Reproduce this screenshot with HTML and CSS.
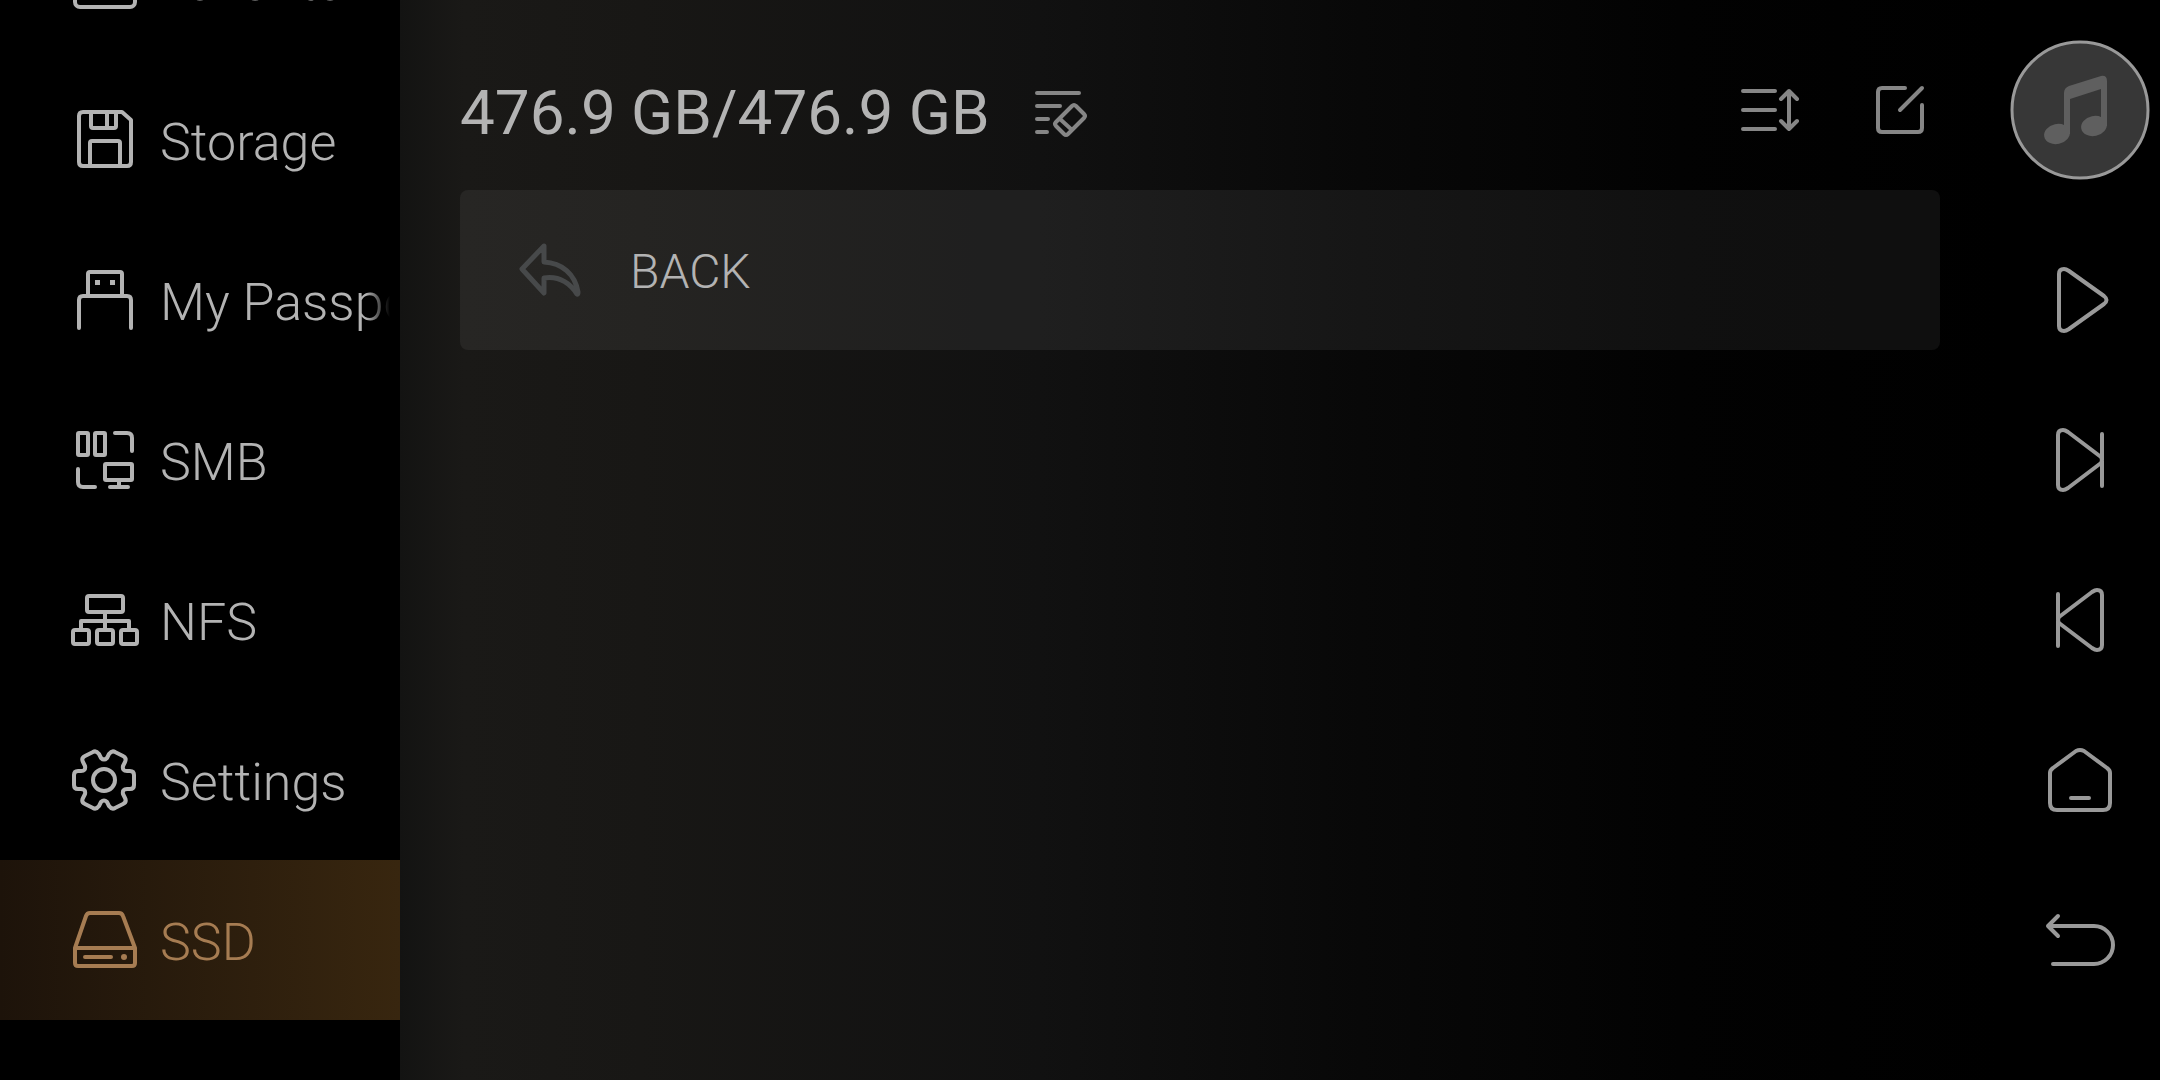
FILE: index.html
```html
<!DOCTYPE html>
<html lang="en">
<head>
<meta charset="utf-8">
<title>Storage browser</title>
<link rel="stylesheet" href="styles.css">
</head>
<body>
<div class="app">
  <nav class="sidebar" aria-label="Sources">
    <a class="source" href="#favorite">
      <svg class="icon" viewBox="0 0 80 80"><rect x="10" y="7" width="60" height="60" rx="5"/></svg>
      <span class="source-name">Favorite</span>
    </a>
    <a class="source" href="#storage">
      <svg class="icon" viewBox="0 0 80 80"><path d="M18 12H57L66 20V62Q66 66 62 66H18Q14 66 14 62V16Q14 12 18 12ZM26 12V26Q26 28 28 28H49Q51 28 51 26V12M42 12V27M25 66V43Q25 41 27 41H53Q55 41 55 43V66"/></svg>
      <span class="source-name">Storage</span>
    </a>
    <a class="source" href="#passport">
      <svg class="icon" viewBox="0 0 80 80"><path d="M14 68V40Q14 36 18 36H62Q66 36 66 40V68M23 36V14Q23 12 25 12H55Q57 12 57 14V36"/><path class="solid" d="M30 20h5v5h-5zM45 20h5v5h-5z"/></svg>
      <span class="source-name">My Passport</span>
    </a>
    <a class="source" href="#smb">
      <svg class="icon" viewBox="0 0 80 80"><rect x="13" y="13" width="10" height="22" rx="1"/><rect x="30" y="13" width="10" height="22" rx="1"/><path d="M50 13H62Q67 13 67 18V31M13 49V62Q13 67 18 67H30M45 67H63M54 60V67"/><rect x="40" y="44" width="27" height="16" rx="1"/></svg>
      <span class="source-name">SMB</span>
    </a>
    <a class="source" href="#nfs">
      <svg class="icon" viewBox="0 0 80 80"><rect x="22" y="16" width="36" height="16" rx="2"/><rect x="8" y="50" width="16" height="14" rx="2"/><rect x="32" y="50" width="16" height="14" rx="2"/><rect x="56" y="50" width="16" height="14" rx="2"/><path d="M40 32V50M16 50V41H64V50"/></svg>
      <span class="source-name">NFS</span>
    </a>
    <a class="source" href="#settings">
      <svg class="icon" viewBox="0 0 80 80"><circle cx="39" cy="40" r="11"/><path d="M28 12Q31 10 34 14L36 18Q39 21 42 18L44 14Q47 10 50 12L58 16Q62 18 60 22L58 26Q57 31 62 31H65Q69 31 69 35V45Q69 49 65 49H62Q57 49 58 54L60 58Q62 62 58 64L50 68Q47 70 44 66L42 62Q39 59 36 62L34 66Q31 70 28 68L20 64Q16 62 18 58L20 54Q21 49 16 49H13Q9 49 9 45V35Q9 31 13 31H16Q21 31 20 26L18 22Q16 18 20 16Z"/></svg>
      <span class="source-name">Settings</span>
    </a>
    <a class="source source-active" href="#ssd" aria-current="page">
      <svg class="icon" viewBox="0 0 80 80"><path d="M25 13H54Q57 13 58 16L70 48V63Q70 66 67 66H13Q10 66 10 63V48L21 16Q22 13 25 13ZM10 48H70M20 57H46"/><circle class="solid" cx="59" cy="57" r="3"/></svg>
      <span class="source-name">SSD</span>
    </a>
  </nav>

  <main class="browser">
    <header class="toolbar">
      <h1 class="capacity">476.9 GB/476.9 GB</h1>
      <button class="tool" type="button" aria-label="Clear list">
        <svg class="icon" viewBox="0 0 80 80"><path d="M17 23H59M17 36H40M17 49H28M17 62H27M36 52L52 36Q54 34 56 36L64 44Q66 46 64 48L48 64Q46 66 44 64L36 56Q34 54 36 52M40 49L52 60"/></svg>
      </button>
      <button class="tool tool-sort" type="button" aria-label="Sort">
        <svg class="icon" viewBox="0 0 80 80"><path d="M13 21H45M13 40H45M13 59H45M59 21V59M51 29L59 21L67 29M51 51L59 59L67 51"/></svg>
      </button>
      <button class="tool" type="button" aria-label="Edit">
        <svg class="icon" viewBox="0 0 80 80"><path d="M45 18H22Q18 18 18 22V58Q18 62 22 62H58Q62 62 62 58V35M62 18L40 40"/></svg>
      </button>
    </header>
    <button class="back" type="button">
      <svg class="icon" viewBox="0 0 80 80"><path d="M34 16L12 39L34 63V48C48 46 59 52 67 64Q68 65 68 62C65 44 52 33 34 32Z"/></svg>
      <span class="back-name">BACK</span>
    </button>
  </main>

  <aside class="controls" aria-label="Player controls">
    <button class="control playing" type="button" aria-label="Now playing">
      <svg class="cover" viewBox="0 0 140 140"><circle class="disc" cx="70" cy="70" r="68"/><g class="note"><ellipse cx="47" cy="94" rx="13" ry="10" transform="rotate(-12 47 94)"/><ellipse cx="84" cy="86" rx="13" ry="10" transform="rotate(-12 84 86)"/><path d="M54 53Q54 48 59 46L91 36Q97 35 97 41V86H91V49L60 59V94H54Z"/></g></svg>
    </button>
    <button class="control" type="button" aria-label="Play">
      <svg class="icon" viewBox="0 0 80 80"><path d="M19 14Q19 9 24 9Q26 9 29 11L64 36Q69 40 64 44L29 69Q26 71 24 71Q19 71 19 66Z"/></svg>
    </button>
    <button class="control" type="button" aria-label="Next">
      <svg class="icon" viewBox="0 0 80 80"><path d="M18 15Q18 10 23 10Q25 10 28 12L61 37Q63 40 61 43L28 68Q25 70 23 70Q18 70 18 65ZM62 14V66"/></svg>
    </button>
    <button class="control" type="button" aria-label="Previous">
      <svg class="icon" viewBox="0 0 80 80"><path d="M62 15Q62 10 57 10Q55 10 52 12L19 37Q17 40 19 43L52 68Q55 70 57 70Q62 70 62 65ZM18 14V66"/></svg>
    </button>
    <button class="control" type="button" aria-label="Home">
      <svg class="icon" viewBox="0 0 80 80"><path d="M36 11Q40 9 44 11L67 28Q70 30 70 33V63Q70 70 63 70H17Q10 70 10 63V33Q10 30 13 28ZM31 58H49"/></svg>
    </button>
    <button class="control" type="button" aria-label="Back">
      <svg class="icon" viewBox="0 0 80 80"><path d="M13 64H54A19 19 0 0 0 54 26H8M18 16L8 26L18 36"/></svg>
    </button>
  </aside>
</div>
</body>
</html>
```
FILE: styles.css
```css
* {
  box-sizing: border-box;
}

body {
  margin: 0;
  background: #000;
  color: #b3b3b3;
  font-family: Roboto, "Liberation Sans", sans-serif;
}

button {
  padding: 0;
  border: 0;
  background: none;
  color: inherit;
  font: inherit;
}

.app {
  display: grid;
  grid-template-columns: 400px 1fr 160px;
  height: 100vh;
  overflow: hidden;
}

.icon {
  display: block;
  flex: none;
  width: 80px;
  height: 80px;
  fill: none;
  stroke: currentColor;
  stroke-width: 4;
  stroke-linecap: round;
  stroke-linejoin: round;
}

.icon .solid {
  fill: currentColor;
  stroke: none;
}

/* The list is scrolled so that its last entries are in view. */
.sidebar {
  display: flex;
  flex-direction: column;
  justify-content: flex-end;
  min-height: 0;
  padding-bottom: 60px;
  background: #000;
}

.source {
  display: flex;
  flex: none;
  align-items: center;
  height: 160px;
  padding: 0 10px 0 65px;
  color: #b3b3b3;
  font-size: 52px;
  font-weight: 300;
  line-height: 64px;
  text-decoration: none;
}

.source-name {
  flex: 1;
  margin-left: 15px;
  padding-top: 6px;
  overflow: hidden;
  white-space: nowrap;
  -webkit-mask-image: linear-gradient(to right, #000 calc(100% - 24px), transparent);
  mask-image: linear-gradient(to right, #000 calc(100% - 24px), transparent);
}

.source-active {
  background: linear-gradient(to right, #1d130a, #38260f);
  color: #a67c52;
}

.browser {
  display: flex;
  flex-direction: column;
  padding: 60px;
  background: linear-gradient(to right, #131312, #1a1917 4%, #181715 15%, #111 40%, #080808 60%, #020202 80%, #000);
}

.toolbar {
  display: flex;
  align-items: center;
  height: 100px;
}

.capacity {
  margin: 0;
  padding-top: 6px;
  font-size: 62px;
  font-weight: 400;
  line-height: 80px;
  white-space: nowrap;
}

.tool {
  margin-left: 30px;
  color: #868686;
}

.tool-sort {
  margin-left: auto;
}

.tool-sort + .tool {
  margin-left: 50px;
}

.back {
  display: flex;
  align-items: center;
  gap: 40px;
  height: 160px;
  margin-top: 30px;
  padding: 0 50px;
  border-radius: 8px;
  background: rgba(255, 255, 255, 0.06);
  font-size: 48px;
  font-weight: 300;
}

.back-name {
  padding-top: 2px;
}

.back .icon {
  color: #47494a;
  stroke-width: 5;
}

.controls {
  display: flex;
  flex-direction: column;
  padding-top: 30px;
}

.control {
  display: grid;
  height: 160px;
  place-items: center;
  color: #999;
}

.playing {
  margin-bottom: 30px;
}

.cover {
  width: 140px;
  height: 140px;
}

.disc {
  fill: #373737;
  stroke: #999;
  stroke-width: 3;
}

.note {
  fill: #5f5f5f;
}
```
